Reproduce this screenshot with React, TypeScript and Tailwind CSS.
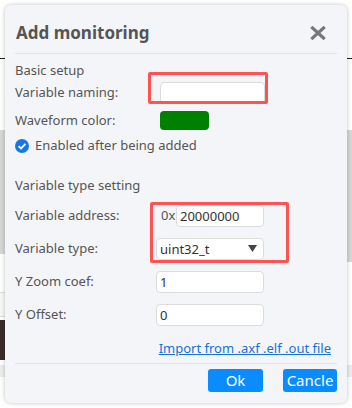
import React from 'react';

const font = { fontFamily: '"Noto Sans", "Open Sans", Arial, sans-serif' };

const Row: React.FC<{ label: string; h?: string; children?: React.ReactNode }> = ({ label, h = 'h-[33px]', children }) => (
  <div className={`flex items-center ${h}`}>
    <div className="w-[141px] text-[13px] text-[#555]">{label}</div>
    {children}
  </div>
);

const Field: React.FC<{ value?: string; w?: string }> = ({ value = '', w = 'w-[108px]' }) => (
  <div className={`${w} h-[22px] bg-white border border-[#dcdcdc] rounded-[4px] px-[3px] text-[13px] text-[#333] leading-[20px]`}>
    {value}
  </div>
);

export default function App() {
  return (
    <div className="relative w-[352px] h-[408px] bg-white overflow-hidden" style={font}>
      {/* page behind the modal */}
      <div className="absolute left-0 right-0 top-[58px] h-px bg-[#222]" />
      <div className="absolute left-0 top-[130px] w-[6px] h-[124px] bg-[#d6d6d6]" />
      <div className="absolute right-0 top-[130px] w-[6px] h-[132px] bg-[#d6d6d6]" />
      <div className="absolute left-0 top-[292px] w-[6px] h-[25px] border-y border-[#ddd] bg-[#f7f7f7]" />
      <div className="absolute left-0 top-[320px] w-[6px] h-[40px] bg-[#3b2c2c]" />
      <div className="absolute left-0 right-0 top-[365px] h-[12px] bg-[#ececec]" />

      {/* modal */}
      <div className="absolute left-[5px] top-[5px] w-[342px] h-[398px] bg-[#f4f5f9] rounded-[6px] shadow-[0_0_4px_rgba(0,0,0,0.25)] px-[10px] flex flex-col">
        <div className="flex items-center justify-between h-[49px] pt-[8px] border-b border-[#e3e4e8]">
          <div className="text-[17px] font-bold text-[#555] pl-px">Add monitoring</div>
          <svg width="16" height="14" viewBox="0 0 16 14" className="mr-[11px]">
            <path d="M2.5 2 L13.5 12 M13.5 2 L2.5 12" stroke="#777" strokeWidth="3.2" strokeLinecap="square" />
          </svg>
        </div>

        <div className="text-[13px] text-[#555] mt-[5px] h-[22px] leading-[22px]">Basic setup</div>
        <div className="relative">
          <div className="flex items-center h-[24px]">
            <div className="w-[145px] text-[13px] text-[#555]">Variable naming:</div>
            <Field w="w-[105px]" />
          </div>
          <div className="absolute left-[133px] top-[-9px] w-[120px] h-[32px] border-[3px] border-[#ff5353] rounded-[2px]" />
        </div>
        <div className="flex items-center h-[31px]">
          <div className="w-[145px] text-[13px] text-[#555]">Waveform color:</div>
          <div className="w-[49px] h-[19px] bg-[#008000] rounded-[4px]" />
        </div>
        <div className="flex items-center gap-[6px] h-[20px]">
          <svg width="14" height="14" viewBox="0 0 14 14">
            <circle cx="7" cy="7" r="7" fill="#1677e8" />
            <path d="M3.6 7.2 L6 9.5 L10.4 4.8" stroke="#fff" strokeWidth="1.8" fill="none" />
          </svg>
          <span className="text-[13px] text-[#555]">Enabled after being added</span>
        </div>

        <div className="text-[13px] text-[#555] mt-[18px] h-[22px] leading-[22px]">Variable type setting</div>
        <div className="relative mt-[4px]">
          <div className="flex items-center h-[32px]">
            <div className="w-[146px] text-[13px] text-[#555]">Variable address:</div>
            <span className="text-[13px] text-[#555] w-[15px]">0x</span>
            <Field value="20000000" w="w-[88px]" />
          </div>
          <Row label="Variable type:">
            <div className="w-[108px] h-[22px] bg-white border border-[#dcdcdc] rounded-[4px] px-[3px] text-[13px] text-[#333] leading-[20px] flex items-center justify-between">
              <span>uint32_t</span>
              <svg width="9" height="7" viewBox="0 0 9 7" className="mr-[3px]">
                <path d="M0 0 H9 L4.5 7 Z" fill="#444" />
              </svg>
            </div>
          </Row>
          <div className="absolute left-[135px] top-[2px] w-[139px] h-[61px] border-[3px] border-[#ff5353] rounded-[2px]" />
        </div>
        <Row label="Y Zoom coef:">
          <Field value="1" />
        </Row>
        <Row label="Y Offset:">
          <Field value="0" />
        </Row>

        <div className="flex justify-end mt-[7px] h-[22px] items-center pr-[6px]">
          <span className="text-[13px] text-[#1473d8] underline">Import from .axf .elf .out file</span>
        </div>
        <div className="border-t border-[#e3e4e8] mt-[3px] flex justify-end gap-[20px] pt-[5px]">
          <button className="w-[55px] h-[23px] bg-[#0a8cff] text-white text-[15px] rounded-[3px] leading-[23px]">Ok</button>
          <button className="w-[54px] h-[23px] bg-[#0a8cff] text-white text-[15px] rounded-[3px] leading-[23px]">Cancle</button>
        </div>
      </div>
    </div>
  );
}
